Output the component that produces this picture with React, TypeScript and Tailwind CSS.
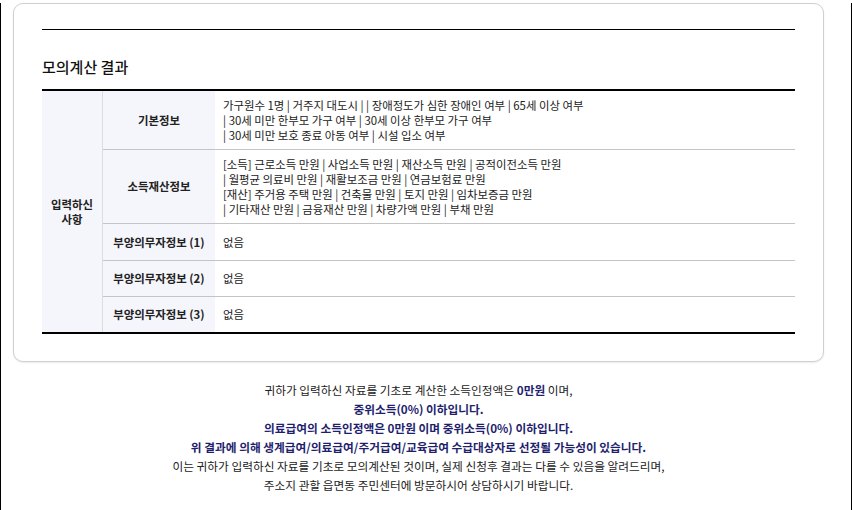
import React from "react";

const font = { fontFamily: '"Noto Sans CJK KR", "Noto Sans", sans-serif' };

export default function App() {
  const rows = [
    {
      label: "기본정보",
      h: "h-[59px]",
      lines: [
        "가구원수 1명 | 거주지 대도시 | | 장애정도가 심한 장애인 여부 | 65세 이상 여부",
        "| 30세 미만 한부모 가구 여부 | 30세 이상 한부모 가구 여부",
        "| 30세 미만 보호 종료 아동 여부 | 시설 입소 여부",
      ],
    },
    {
      label: "소득재산정보",
      h: "h-[74px]",
      lines: [
        "[소득] 근로소득 만원 | 사업소득 만원 | 재산소득 만원 | 공적이전소득 만원",
        "| 월평균 의료비 만원 | 재활보조금 만원 | 연금보험료 만원",
        "[재산] 주거용 주택 만원 | 건축물 만원 | 토지 만원 | 임차보증금 만원",
        "| 기타재산 만원 | 금융재산 만원 | 차량가액 만원 | 부채 만원",
      ],
    },
    { label: "부양의무자정보 (1)", h: "h-[37px]", lines: ["없음"] },
    { label: "부양의무자정보 (2)", h: "h-[36px]", lines: ["없음"] },
    { label: "부양의무자정보 (3)", h: "h-[35px]", lines: ["없음"] },
  ];

  return (
    <div
      className="h-[510px] w-[852px] bg-white border-l border-r border-b border-black text-[#222]"
      style={font}
    >
      <div className="ml-[12px] mt-[3px] w-[811px] rounded-[10px] border border-[#cfcfcf] bg-white px-[28px] pt-[25px] pb-[27px] shadow-[0_1px_2px_rgba(0,0,0,0.08)]">
        <div className="border-t border-black" />
        <h2 className="mt-[26px] text-[15px] font-medium leading-[22px] text-[#111]">모의계산 결과</h2>

        <div className="mt-[11px] flex border-t-2 border-b-2 border-black text-[11.4px] leading-[15px]">
          <div className="flex w-[61px] shrink-0 items-center justify-center border-r border-[#dcdcdc] bg-[#f5f6fb] text-center font-bold text-[#222]">
            입력하신
            <br />
            사항
          </div>
          <div className="flex flex-1 flex-col">
            {rows.map((r, i) => (
              <div
                key={i}
                className={`flex ${r.h} ${i < rows.length - 1 ? "border-b border-[#c4c4c4]" : ""}`}
              >
                <div className="flex w-[112px] shrink-0 items-center justify-center bg-[#f5f6fb] font-bold text-[#222]">
                  {r.label}
                </div>
                <div className="flex flex-1 flex-col justify-center pl-[8px] text-[#222]">
                  {r.lines.map((l, j) => (
                    <div key={j}>{l}</div>
                  ))}
                </div>
              </div>
            ))}
          </div>
        </div>
      </div>

      <div className="ml-[12px] mt-[18px] w-[811px] text-center text-[11.7px] leading-[19px] text-[#222]">
        <p>
          귀하가 입력하신 자료를 기초로 계산한 소득인정액은{" "}
          <span className="font-bold text-[#1f1f6e]">0만원</span> 이며,
        </p>
        <p className="font-bold text-[#1f1f6e]">중위소득(0%) 이하입니다.</p>
        <p className="font-bold text-[#1f1f6e]">
          의료급여의 소득인정액은 0만원 이며 중위소득(0%) 이하입니다.
        </p>
        <p className="font-bold text-[#1f1f6e]">
          위 결과에 의해 생계급여/의료급여/주거급여/교육급여 수급대상자로 선정될 가능성이 있습니다.
        </p>
        <p>이는 귀하가 입력하신 자료를 기초로 모의계산된 것이며, 실제 신청후 결과는 다를 수 있음을 알려드리며,</p>
        <p>주소지 관할 읍면동 주민센터에 방문하시어 상담하시기 바랍니다.</p>
      </div>
    </div>
  );
}
